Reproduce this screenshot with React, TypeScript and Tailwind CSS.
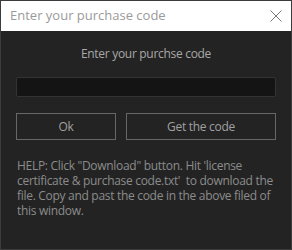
import React from 'react';

const font = { fontFamily: '"Open Sans", "Noto Sans", sans-serif' };

const App: React.FC = () => {
  return (
    <div className="w-[292px] h-[250px] border border-[#3c3c3c] bg-[#232323] flex flex-col" style={font}>
      <div className="h-[30px] bg-white flex items-center justify-between pl-[9px] pr-[9px] shrink-0">
        <span className="text-[13px] text-[#9a9a9a]">Enter your purchase code</span>
        <svg width="12" height="12" viewBox="0 0 12 12" className="text-[#7a7a7a]">
          <path d="M0.5 0.5L11.5 11.5M11.5 0.5L0.5 11.5" stroke="currentColor" strokeWidth="1" fill="none" />
        </svg>
      </div>
      <div className="flex flex-col px-[15px] pt-[15px] tracking-[-0.3px]">
        <p className="text-center text-[12px] leading-[16px] text-[#a8a8a8]">Enter your purchse code</p>
        <input
          className="mt-[15px] h-[20px] w-full bg-[#141414] border border-[#333333] rounded-[2px] outline-none"
          aria-label="purchase code"
        />
        <div className="mt-[16px] flex gap-[10px]">
          <button className="w-[100px] h-[27px] border border-[#676767] text-[12px] text-[#a0a0a0] tracking-[-0.3px]">Ok</button>
          <button className="flex-1 h-[27px] border border-[#676767] text-[12px] text-[#a0a0a0] tracking-[-0.3px]">Get the code</button>
        </div>
        <p className="mt-[18px] pl-[1px] text-[12px] leading-[15px] text-[#8c8c8c]">
          HELP: Click "Download" button. Hit 'license certificate &amp; purchase code.txt'&nbsp; to download the file. Copy and past the code in the above filed of this window.
        </p>
      </div>
    </div>
  );
};

export default App;
